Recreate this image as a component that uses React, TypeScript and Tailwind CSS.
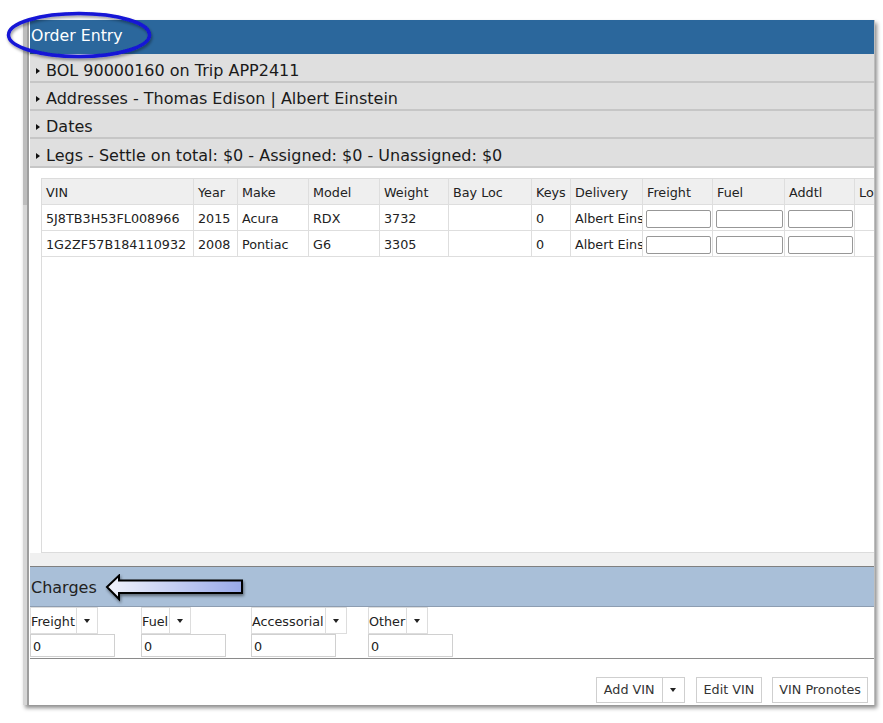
import * as React from "react";

const font = "font-['DejaVu_Sans',Verdana,sans-serif]";

type Col = { label: string; w: string };

const cols: Col[] = [
    { label: "VIN", w: "w-[152px]" },
    { label: "Year", w: "w-[44px]" },
    { label: "Make", w: "w-[71px]" },
    { label: "Model", w: "w-[71px]" },
    { label: "Weight", w: "w-[69px]" },
    { label: "Bay Loc", w: "w-[83px]" },
    { label: "Keys", w: "w-[39px]" },
    { label: "Delivery", w: "w-[72px]" },
    { label: "Freight", w: "w-[70px]" },
    { label: "Fuel", w: "w-[72px]" },
    { label: "Addtl", w: "w-[70px]" },
    { label: "Lot", w: "w-[60px]" },
];

const vehicles = [
    ["5J8TB3H53FL008966", "2015", "Acura", "RDX", "3732", "", "0", "Albert Einstein"],
    ["1G2ZF57B184110932", "2008", "Pontiac", "G6", "3305", "", "0", "Albert Einstein"],
];

const sections = [
    "BOL 90000160 on Trip APP2411",
    "Addresses - Thomas Edison | Albert Einstein",
    "Dates",
    "Legs - Settle on total: $0 - Assigned: $0 - Unassigned: $0",
];

const charges = [
    { label: "Freight", w: "w-[111px]" },
    { label: "Fuel", w: "w-[110px]" },
    { label: "Accessorial", w: "w-[117px]" },
    { label: "Other", w: "w-[120px]" },
];

function Caret() {
    return <span className="inline-block w-0 h-0 border-x-[3.5px] border-x-transparent border-t-[4px] border-t-[#222]" />;
}

function SectionRow({ title, tall }: { title: string; tall?: boolean }) {
    return (
        <div
            className={`flex items-center gap-[6px] pl-[6px] pt-[6px] bg-[#dfdfdf] border-b-2 border-[#c6c6c6] text-[16px] text-[#1a1a1a] ${
                tall ? "h-[29px]" : "h-[28px]"
            }`}
        >
            <span className="inline-block w-0 h-0 border-y-[3.5px] border-y-transparent border-l-[4px] border-l-[#111]" />
            <span className="leading-none">{title}</span>
        </div>
    );
}

export default function App() {
    return (
        <div className={`relative w-[883px] h-[723px] bg-white overflow-hidden ${font}`}>
            <div className="pt-[20px] pl-[23px]">
                <div className="flex w-[852px] h-[685px] bg-white border-r border-[#bdbdbd] shadow-[2px_3px_4px_rgba(0,0,0,0.45)]">
                    {/* left scroll strip */}
                    <div className="w-[4px] bg-[#d6d6d6] flex flex-col">
                        <div className="h-[185px] bg-[#bdbdbd]" />
                    </div>
                    <div className="w-[2px] bg-[#9d9d9d]" />
                    <div className="w-[1px] bg-white" />

                    <div className="flex-1 flex flex-col min-w-0">
                        <div className="h-[34px] bg-[#2b679c] flex items-center pl-[1px] pb-[3px] text-[15.75px] text-white">
                            Order Entry
                        </div>
                        {sections.map((s, i) => (
                            <SectionRow key={s} title={s} tall={i === 0 || i === 3} />
                        ))}

                        {/* vehicles grid */}
                        <div className="h-[385px] flex flex-col pl-[11px] pt-[10px] bg-white">
                            <div className="flex-1 border-l border-t border-b border-[#dcdcdc] overflow-hidden text-[12.75px] text-[#222]">
                                <div className="flex h-[26px] bg-[#efefef] border-b border-[#dedede]">
                                    {cols.map((c) => (
                                        <div
                                            key={c.label}
                                            className={`${c.w} shrink-0 flex items-center pl-[4px] pt-[2px] border-r border-[#dedede] whitespace-nowrap overflow-hidden`}
                                        >
                                            {c.label}
                                        </div>
                                    ))}
                                </div>
                                {vehicles.map((v) => (
                                    <div key={v[0]} className="flex h-[26px] border-b border-[#dedede]">
                                        {cols.map((c, i) => (
                                            <div
                                                key={c.label}
                                                className={`${c.w} shrink-0 flex items-center pt-[2px] border-r border-[#dedede] whitespace-nowrap overflow-hidden ${
                                                    i >= 8 && i <= 10 ? "pl-[3px] pr-[1px]" : "pl-[4px]"
                                                }`}
                                            >
                                                {i < 8 ? (
                                                    v[i]
                                                ) : i <= 10 ? (
                                                    <input
                                                        className="w-full h-[18px] bg-white border border-[#979797] rounded-[2px] mt-[1px]"
                                                        aria-label={c.label}
                                                    />
                                                ) : null}
                                            </div>
                                        ))}
                                    </div>
                                ))}
                            </div>
                        </div>

                        <div className="h-[14px] bg-[#f0f0f0] border-b border-[#808080]" />

                        {/* charges */}
                        <div className="relative h-[40px] bg-[#a9bfd8] border-b border-[#8d9db1] flex items-center pl-[1px] pt-[3px] text-[16px] text-[#222]">
                            Charges
                            <svg
                                className="absolute left-[75px] top-[7px]"
                                width="142"
                                height="32"
                                viewBox="0 0 142 32"
                            >
                                <defs>
                                    <linearGradient id="arrowFill" x1="0" x2="1" y1="0" y2="0">
                                        <stop offset="0" stopColor="#f1f3fc" />
                                        <stop offset="1" stopColor="#98a9e9" />
                                    </linearGradient>
                                    <filter id="arrowShadow" x="-10%" y="-30%" width="120%" height="170%">
                                        <feDropShadow dx="1" dy="2" stdDeviation="1.5" floodColor="#000" floodOpacity="0.45" />
                                    </filter>
                                </defs>
                                <path
                                    d="M2 13 L14 1.5 L14 6.5 L137 6.5 L137 19 L14 19 L14 25 Z"
                                    fill="url(#arrowFill)"
                                    stroke="#000"
                                    strokeWidth="2"
                                    strokeLinejoin="miter"
                                    filter="url(#arrowShadow)"
                                />
                            </svg>
                        </div>

                        <div className="h-[52px] flex border-b border-[#8a8a8a] text-[12.75px] text-[#222]">
                            {charges.map((c) => (
                                <div key={c.label} className={`${c.w} shrink-0 flex flex-col`}>
                                    <div className="flex self-start h-[27px] bg-white border border-[#dddddd]">
                                        <span className="flex items-center pt-[2px] pr-[1px] border-r border-[#dddddd]">{c.label}</span>
                                        <span className="w-[20px] flex items-center justify-center">
                                            <Caret />
                                        </span>
                                    </div>
                                    <div className="w-[85px] h-[23px] flex items-center pl-[2px] pt-[2px] bg-white border border-[#d0d0d0]">
                                        0
                                    </div>
                                </div>
                            ))}
                        </div>

                        <div className="flex-1 flex items-end justify-end gap-[10px] pr-[6px] pb-[2px] text-[12.75px] text-[#333]">
                            <div className="flex h-[26px] mr-[1px] bg-white border border-[#cfcfcf]">
                                <span className="flex items-center px-[7px] border-r border-[#cfcfcf]">Add VIN</span>
                                <span className="w-[21px] flex items-center justify-center">
                                    <Caret />
                                </span>
                            </div>
                            <div className="flex items-center h-[26px] px-[7px] bg-white border border-[#cfcfcf]">Edit VIN</div>
                            <div className="flex items-center h-[26px] px-[6px] bg-white border border-[#cfcfcf]">VIN Pronotes</div>
                        </div>
                    </div>
                </div>
            </div>

            {/* annotation oval */}
            <svg className="absolute left-0 top-0 pointer-events-none" width="170" height="70" viewBox="0 0 170 70">
                <defs>
                    <filter id="ovalShadow" x="-10%" y="-20%" width="120%" height="150%">
                        <feDropShadow dx="1" dy="2" stdDeviation="1.5" floodColor="#000" floodOpacity="0.4" />
                    </filter>
                </defs>
                <ellipse cx="79" cy="35" rx="70.5" ry="21.5" fill="none" stroke="#1414d6" strokeWidth="3.5" filter="url(#ovalShadow)" />
            </svg>
        </div>
    );
}
